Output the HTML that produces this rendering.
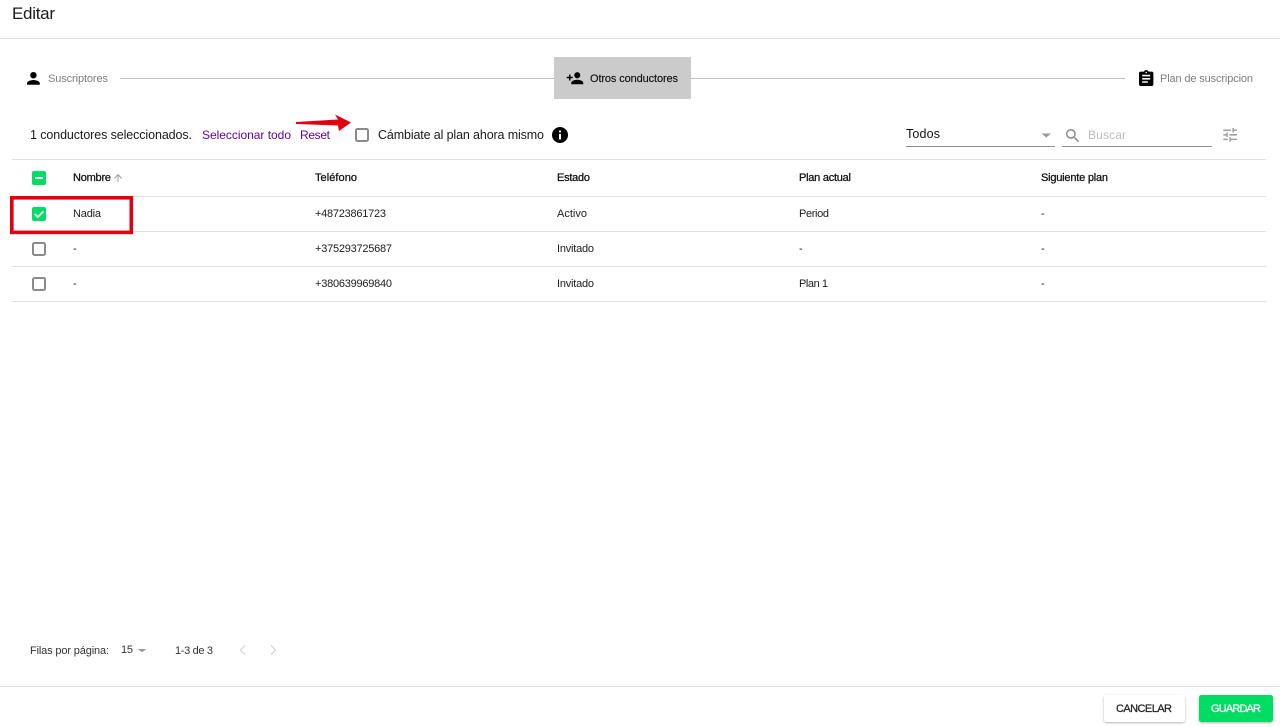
<!DOCTYPE html>
<html lang="es">
<head>
<meta charset="utf-8">
<title>Editar</title>
<style>
html,body{margin:0;padding:0;background:#fff;width:1280px;height:727px;overflow:hidden}
svg{display:block}
text{font-family:"Liberation Sans",sans-serif;white-space:pre}
.s{font-size:11px;fill:#1c1c1c}
.h{font-size:11px;fill:#111;stroke:#111;stroke-width:.28px}
.m{font-size:12.5px;fill:#1a1a1a}
.l{font-size:12px;fill:#5f00a8}
.g{font-size:11px;fill:#7d7d7d}
.p{font-size:11px;fill:#333}
</style>
</head>
<body>
<svg width="1280" height="727" viewBox="0 0 1280 727" xmlns="http://www.w3.org/2000/svg">
<rect width="1280" height="727" fill="#fff"/>

<!-- Header -->
<text x="12" y="19" font-size="17" fill="#1b1b1b" textLength="43" lengthAdjust="spacing">Editar</text>
<rect x="0" y="38" width="1280" height="1" fill="#e0e0e0"/>

<!-- Stepper -->
<rect x="120" y="78" width="434" height="1" fill="#bdbdbd"/>
<rect x="691" y="78" width="434" height="1" fill="#bdbdbd"/>
<rect x="554" y="57" width="137" height="42" fill="#cbcbcb"/>

<path transform="translate(23.8,68.8) scale(.8)" fill="#000" d="M12 12c2.21 0 4-1.79 4-4s-1.79-4-4-4-4 1.79-4 4 1.79 4 4 4zm0 2c-2.67 0-8 1.34-8 4v2h16v-2c0-2.66-5.33-4-8-4z"/>
<text class="g" x="48" y="82" textLength="60" lengthAdjust="spacing">Suscriptores</text>

<path transform="translate(566,69.3) scale(.75)" fill="#000" d="M15 12c2.21 0 4-1.79 4-4s-1.79-4-4-4-4 1.79-4 4 1.79 4 4 4zm-9-2V7H4v3H1v2h3v3h2v-3h3v-2H6zm9 4c-2.67 0-8 1.34-8 4v2h16v-2c0-2.66-5.33-4-8-4z"/>
<text x="590" y="82" font-size="11" fill="#111" stroke="#111" stroke-width=".15" textLength="88" lengthAdjust="spacing">Otros conductores</text>

<path transform="translate(1136.6,69.2) scale(.8)" fill="#000" d="M19 3h-4.18C14.4 1.84 13.3 1 12 1c-1.3 0-2.4.84-2.82 2H5c-1.1 0-2 .9-2 2v14c0 1.1.9 2 2 2h14c1.1 0 2-.9 2-2V5c0-1.1-.9-2-2-2zm-7 0c.55 0 1 .45 1 1s-.45 1-1 1-1-.45-1-1 .45-1 1-1zm2 14H7v-2h7v2zm3-4H7v-2h10v2zm0-4H7V7h10v2z"/>
<text class="g" x="1160" y="82" textLength="93" lengthAdjust="spacing">Plan de suscripcion</text>

<!-- Toolbar -->
<text class="m" x="30" y="139" textLength="162" lengthAdjust="spacing">1 conductores seleccionados.</text>
<text class="l" x="202" y="139" textLength="89" lengthAdjust="spacing">Seleccionar todo</text>
<text class="l" x="300" y="139" textLength="30" lengthAdjust="spacing">Reset</text>

<!-- Red arrow -->
<path fill="#e3000f" d="M296 122 L338 119.5 L335 114.5 L351 122.5 L339 131 L338 125.5 L296 124 Z"/>

<rect x="356" y="129" width="12" height="12" rx="1.5" fill="#fff" stroke="#8a8a8a" stroke-width="2"/>
<text class="m" x="378" y="139" textLength="166" lengthAdjust="spacing">Cámbiate al plan ahora mismo</text>
<circle cx="560" cy="135" r="8" fill="#000"/>
<rect x="559" y="134" width="2" height="5.5" fill="#fff"/>
<rect x="559" y="130.5" width="2" height="2" fill="#fff"/>

<!-- Filter -->
<text x="906" y="138" font-size="12.5" fill="#111" textLength="34" lengthAdjust="spacing">Todos</text>
<path d="M1041.5 133.5h9.5l-4.7 4z" fill="#9a9a9a"/>
<rect x="906" y="146" width="149" height="1" fill="#8f8f8f"/>

<path transform="translate(1063.75,126.75) scale(.75)" fill="#8a8a8a" d="M15.5 14h-.79l-.28-.27C15.41 12.59 16 11.11 16 9.5 16 5.91 13.09 3 9.5 3S3 5.91 3 9.5 5.91 16 9.5 16c1.61 0 3.09-.59 4.23-1.57l.27.28v.79l5 4.99L20.49 19l-4.99-5zm-6 0C7.01 14 5 11.99 5 9.5S7.01 5 9.5 5 14 7.01 14 9.5 11.99 14 9.5 14z"/>
<text x="1088" y="139" font-size="12" fill="#bdbdbd" textLength="38" lengthAdjust="spacing">Buscar</text>
<rect x="1062" y="146" width="150" height="1" fill="#8f8f8f"/>

<path transform="translate(1221,125.7) scale(.76)" fill="#a0a0a0" d="M3 17v2h6v-2H3zM3 5v2h10V5H3zm10 16v-2h8v-2h-8v-2h-2v6h2zM7 9v2H3v2h4v2h2V9H7zm14 4v-2H11v2h10zm-6-4h2V7h4V5h-4V3h-2v6z"/>

<!-- Table lines -->
<rect x="12" y="159" width="1254" height="1" fill="#e0e0e0"/>
<rect x="12" y="196" width="1254" height="1" fill="#e0e0e0"/>
<rect x="12" y="231" width="1254" height="1" fill="#e0e0e0"/>
<rect x="12" y="266" width="1254" height="1" fill="#e0e0e0"/>
<rect x="12" y="301" width="1254" height="1" fill="#e0e0e0"/>

<!-- Table header -->
<rect x="32" y="171" width="14" height="14" rx="2" fill="#00dd62"/>
<rect x="35" y="177" width="8" height="2" fill="#fff"/>
<text class="h" x="73" y="181" textLength="38" lengthAdjust="spacing">Nombre</text>
<path transform="translate(112,172) scale(.5)" fill="#9a9a9a" d="M4 12l1.41 1.41L11 7.83V20h2V7.83l5.58 5.59L20 12l-8-8-8 8z"/>
<text class="h" x="315" y="181" textLength="42" lengthAdjust="spacing">Teléfono</text>
<text class="h" x="557" y="181" textLength="33" lengthAdjust="spacing">Estado</text>
<text class="h" x="799" y="181" textLength="52" lengthAdjust="spacing">Plan actual</text>
<text class="h" x="1041" y="181" textLength="67" lengthAdjust="spacing">Siguiente plan</text>

<!-- Row 1 -->
<rect x="32" y="207" width="14" height="14" rx="2" fill="#00dd62"/>
<path d="M34.8 214l3 3 5.6-5.6" fill="none" stroke="#fff" stroke-width="1.7"/>
<text class="s" x="73" y="217" textLength="28" lengthAdjust="spacing">Nadia</text>
<text class="s" x="315" y="217" textLength="71" lengthAdjust="spacing">+48723861723</text>
<text class="s" x="557" y="217" textLength="30" lengthAdjust="spacing">Activo</text>
<text class="s" x="799" y="217" textLength="30" lengthAdjust="spacing">Period</text>
<text class="s" x="1041" y="217">-</text>

<!-- Row 2 -->
<rect x="33" y="243" width="12" height="12" rx="1.5" fill="#fff" stroke="#8a8a8a" stroke-width="2"/>
<text class="s" x="73" y="252">-</text>
<text class="s" x="315" y="252" textLength="77" lengthAdjust="spacing">+375293725687</text>
<text class="s" x="557" y="252" textLength="37" lengthAdjust="spacing">Invitado</text>
<text class="s" x="799" y="252">-</text>
<text class="s" x="1041" y="252">-</text>

<!-- Row 3 -->
<rect x="33" y="278" width="12" height="12" rx="1.5" fill="#fff" stroke="#8a8a8a" stroke-width="2"/>
<text class="s" x="73" y="287">-</text>
<text class="s" x="315" y="287" textLength="77" lengthAdjust="spacing">+380639969840</text>
<text class="s" x="557" y="287" textLength="37" lengthAdjust="spacing">Invitado</text>
<text class="s" x="799" y="287" textLength="29" lengthAdjust="spacing">Plan 1</text>
<text class="s" x="1041" y="287">-</text>

<!-- Red highlight -->
<rect x="11.8" y="197.8" width="119.5" height="34.6" fill="none" stroke="#e0000f" stroke-width="3.6"/>

<!-- Pagination -->
<text class="p" x="30" y="654" textLength="79" lengthAdjust="spacing">Filas por página:</text>
<text class="p" x="121" y="653" textLength="12" lengthAdjust="spacing">15</text>
<path d="M137.5 649h9l-4.5 3.2z" fill="#9a9a9a"/>
<text class="p" x="175" y="654" textLength="38" lengthAdjust="spacing">1-3 de 3</text>
<path d="M245 645.5l-4.5 4.5 4.5 4.5" fill="none" stroke="#cfcfcf" stroke-width="1.1"/>
<path d="M271 645.5l4.5 4.5-4.5 4.5" fill="none" stroke="#cfcfcf" stroke-width="1.1"/>

<!-- Footer -->
<rect x="0" y="686" width="1280" height="1" fill="#e0e0e0"/>

<defs>
<filter id="sh" x="-10%" y="-20%" width="120%" height="150%">
<feDropShadow dx="0" dy="1" stdDeviation="1" flood-color="#000" flood-opacity=".3"/>
</filter>
</defs>
<rect x="1104" y="695" width="81" height="27" rx="2.5" fill="#fff" filter="url(#sh)"/>
<text x="1116" y="712" font-size="11" fill="#222" stroke="#222" stroke-width=".25" textLength="56" lengthAdjust="spacing">CANCELAR</text>
<rect x="1199" y="695" width="74" height="27" rx="2.5" fill="#00dd62" filter="url(#sh)"/>
<text x="1211" y="712" font-size="11" fill="#fff" stroke="#fff" stroke-width=".3" textLength="50" lengthAdjust="spacing">GUARDAR</text>
</svg>
</body>
</html>
